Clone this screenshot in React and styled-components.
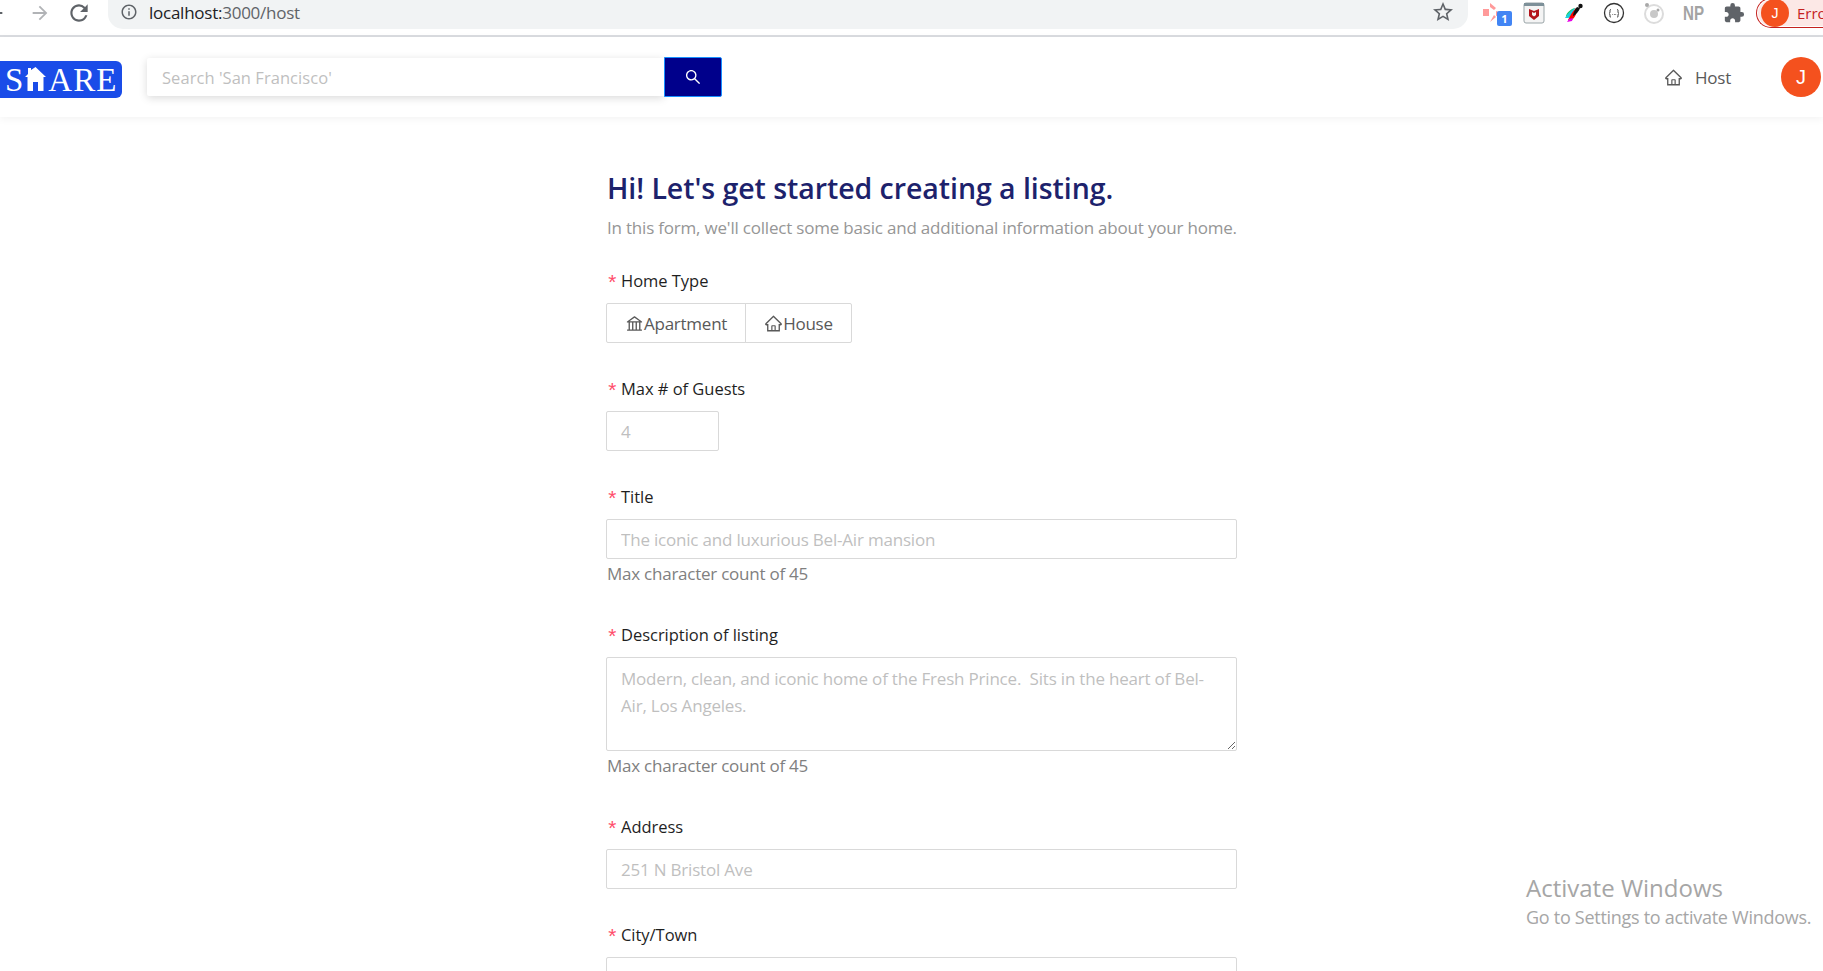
import React from "react";
import styled, { createGlobalStyle } from "styled-components";
import { AiOutlineBank, AiOutlineHome, AiOutlineSearch } from "react-icons/ai";
import { MdArrowForward, MdExtension, MdInfoOutline, MdRefresh, MdStarBorder, MdArrowBack } from "react-icons/md";

const GlobalStyle = createGlobalStyle`
  html, body {
    margin: 0;
    height: 100%;
    overflow: hidden;
    background: #fff;
  }
  body {
    font-family: "Open Sans", "Noto Sans", sans-serif;
  }
  * {
    box-sizing: border-box;
  }
`;

const Page = styled.div`
  width: 1823px;
  height: 971px;
  overflow: hidden;
  position: relative;
`;

const BrowserBar = styled.div`
  display: flex;
  align-items: flex-start;
  height: 37px;
  border-bottom: 2px solid #dadce0;
  background: #fff;
  overflow: hidden;
`;
const NavIcons = styled.div`
  display: flex;
  align-items: center;
  gap: 15px;
  height: 26px;
  margin-left: -16px;
  width: 124px;
  flex-shrink: 0;
  svg {
    display: block;
  }
`;
const NavIcon = styled.span`
  display: flex;
  margin-right: ${(p) => p.$after || 0}px;
  color: ${(p) => p.$color};
`;
const Omnibox = styled.div`
  display: flex;
  align-items: center;
  width: 1360px;
  height: 30px;
  margin-top: -1px;
  padding: 0 13px 4px 12px;
  background: #f1f3f4;
  border-radius: 0 0 15px 15px;
  flex-shrink: 0;
`;
const Url = styled.span`
  margin-left: 11px;
  font-size: 17px;
  letter-spacing: -0.25px;
  color: #5f6368;
  b {
    font-weight: 400;
    color: #202124;
  }
`;
const StarWrap = styled.span`
  display: flex;
  margin-left: auto;
  color: #5f6368;
`;
const Extensions = styled.div`
  display: flex;
  align-items: center;
  height: 26px;
  margin-left: 12px;
  gap: 12px;
  flex-shrink: 0;
`;
const ExtSlot = styled.span`
  display: flex;
  justify-content: center;
  width: 28px;
  position: relative;
  color: #5f6368;
`;
const Badge = styled.span`
  position: absolute;
  right: -4px;
  top: 9px;
  width: 15px;
  height: 15px;
  border-radius: 2px;
  background: #4285f4;
  color: #fff;
  font-size: 11px;
  font-weight: 700;
  line-height: 15px;
  text-align: center;
`;
const NpMark = styled.span`
  font-family: "Liberation Sans", sans-serif;
  font-size: 21px;
  line-height: 24px;
  font-weight: 700;
  color: #a3a3a3;
  transform: scaleX(0.72);
`;
const ErrorPill = styled.div`
  display: flex;
  align-items: center;
  height: 30px;
  width: 70px;
  margin-top: -2px;
  margin-left: 8px;
  padding-left: 4px;
  border: 1px solid #c5221f;
  border-right: 0;
  border-radius: 15px 0 0 15px;
  background: #fce8e6;
  box-shadow: inset 0 0 0 1px #fff;
  color: #c5221f;
  font-size: 15px;
  flex-shrink: 0;
`;
const PillAvatar = styled.span`
  display: flex;
  align-items: center;
  justify-content: center;
  width: 28px;
  height: 28px;
  border-radius: 50%;
  background: #f4511e;
  color: #fff;
  font-family: "Liberation Sans", sans-serif;
  font-size: 14px;
  margin-right: 8px;
  flex-shrink: 0;
`;

const Header = styled.header`
  display: flex;
  align-items: center;
  height: 80px;
  background: #fff;
  box-shadow: 0 2px 8px rgba(0, 0, 0, 0.05);
  padding-right: 2px;
`;
const Logo = styled.div`
  display: flex;
  align-items: center;
  width: 122px;
  height: 37px;
  margin-top: 5px;
  padding: 1px 0 0 5px;
  background: #1a4ce8;
  border-radius: 0 6px 6px 0;
  color: #fff;
  font-family: "Liberation Serif", serif;
  font-size: 33px;
  line-height: 37px;
  letter-spacing: 1px;
  svg {
    margin: 0 2px 3px 1px;
  }
`;
const SearchForm = styled.div`
  display: flex;
  margin-left: 25px;
`;
const SearchInput = styled.input`
  width: 517px;
  height: 38px;
  padding: 2px 15px 0;
  border: 0;
  outline: 0;
  border-radius: 2px 0 0 2px;
  box-shadow: 0 2px 8px rgba(0, 0, 0, 0.15);
  font-family: inherit;
  font-size: 16.5px;
  letter-spacing: 0.05px;
  &::placeholder {
    color: #bfbfbf;
  }
`;
const SearchButton = styled.button`
  display: flex;
  align-items: center;
  justify-content: center;
  width: 58px;
  height: 40px;
  margin-top: -1px;
  padding: 0;
  border: 1px solid #1890ff;
  border-radius: 0 2px 2px 0;
  background: #00008b;
  color: #fff;
`;
const HostLink = styled.a`
  display: flex;
  align-items: center;
  gap: 12px;
  margin-left: auto;
  margin-right: 50px;
  font-size: 17px;
  color: #595959;
  letter-spacing: -0.2px;
`;
const Avatar = styled.span`
  display: flex;
  align-items: center;
  justify-content: center;
  width: 40px;
  height: 40px;
  border-radius: 50%;
  background: #f4511e;
  color: #fff;
  font-family: "Liberation Sans", sans-serif;
  font-size: 20px;
`;

const Main = styled.main`
  display: flex;
  flex-direction: column;
  width: 631px;
  margin-left: 606px;
  padding-top: 50px;
`;
const Heading = styled.h1`
  margin: 0 0 0 1px;
  font-size: 28.5px;
  line-height: 42px;
  font-weight: 600;
  color: #1d226c;
  letter-spacing: -0.05px;
  white-space: nowrap;
`;
const Intro = styled.p`
  margin: 7px 0 29px 1px;
  font-size: 17px;
  line-height: 24px;
  color: #969696;
  letter-spacing: -0.2px;
  white-space: nowrap;
`;
const Field = styled.div`
  margin-bottom: ${(p) => p.$gap}px;
`;
const Label = styled.label`
  display: flex;
  align-items: center;
  height: 24px;
  margin-bottom: 10px;
  font-size: 16.5px;
  line-height: 24px;
  color: #1f1f1f;
  letter-spacing: -0.03px;
  &::before {
    content: "*";
    width: 15px;
    padding-top: 7px;
    color: #ff4d6a;
    font-family: "Liberation Mono", monospace;
    font-size: 21px;
  }
`;
const RadioGroup = styled.div`
  display: inline-flex;
  height: 40px;
`;
const RadioButton = styled.span`
  display: inline-flex;
  align-items: center;
  height: 40px;
  padding: 0 18px 0 19px;
  border: 1px solid #d9d9d9;
  margin-left: -1px;
  font-size: 17px;
  letter-spacing: -0.25px;
  color: #595959;
  &:first-child {
    margin-left: 0;
    border-radius: 2px 0 0 2px;
  }
  &:last-child {
    border-radius: 0 2px 2px 0;
  }
  svg {
    margin-left: -1px;
  }
`;
const TextInput = styled.input`
  display: block;
  width: ${(p) => p.$width || "100%"};
  height: 40px;
  padding: 1px 14px 0;
  border: 1px solid #d9d9d9;
  border-radius: 2px;
  outline: 0;
  font-family: inherit;
  font-size: 17px;
  letter-spacing: -0.2px;
  &::placeholder {
    color: #bfbfbf;
  }
`;
const TextArea = styled.textarea`
  display: block;
  width: 100%;
  height: 94px;
  padding: 7px 14px;
  border: 1px solid #d9d9d9;
  border-radius: 2px;
  outline: 0;
  font-family: inherit;
  font-size: 17px;
  line-height: 27px;
  letter-spacing: -0.2px;
  &::placeholder {
    color: #bfbfbf;
  }
`;
const Help = styled.div`
  height: 30px;
  padding-left: 1px;
  font-size: 17px;
  line-height: 30px;
  letter-spacing: -0.24px;
  color: #808080;
`;

const Watermark = styled.div`
  position: absolute;
  left: 1526px;
  top: 872px;
  color: #a6a6a6;
  font-size: 18px;
  line-height: 26px;
  letter-spacing: -0.28px;
  white-space: nowrap;
  strong {
    display: block;
    font-weight: 400;
    font-size: 24px;
    line-height: 32px;
    letter-spacing: 0;
  }
`;

function McafeeIcon() {
  return (
    <svg width="22" height="22" viewBox="0 0 22 22">
      <rect x="1" y="1" width="20" height="20" rx="2" fill="#f4f4f4" stroke="#9aa5a8" />
      <rect x="1" y="1" width="20" height="3" fill="#7d9099" />
      <path d="M6 7l5 2 5-2v7l-5 4-5-4z" fill="#b3141b" />
      <path d="M9 10l2 1 2-1v3l-2 1.500-2-1.500z" fill="#f4f4f4" />
    </svg>
  );
}

function FeatherIcon() {
  return (
    <svg width="24" height="24" viewBox="0 0 24 24">
      <path d="M4 15c1-4 5-7 9-8l-5 9z" fill="#19c65a" />
      <path d="M3 17c3-5 6-8 10-10l-3 9-4 1z" fill="#19d0e0" />
      <path d="M6 19c2-4 4-8 8-12 2 4-1 9-4 12z" fill="#f00" />
      <path d="M5 21l2-3 4-1-1 3z" fill="#e600e6" />
      <path d="M11 15c0-3 2-7 4-9l3 1c-1 3-4 7-7 8z" fill="#111" />
      <circle cx="18.500" cy="5" r="2.200" fill="#111" />
    </svg>
  );
}

function BracesIcon() {
  return (
    <svg width="22" height="22" viewBox="0 0 22 22" fill="none" stroke="#333">
      <circle cx="11" cy="11" r="9.500" strokeWidth="1.300" />
      <path d="M8 7.500c-1 0-1 .5-1 1.500s0 2-1 2.500c1 .5 1 1.500 1 2.500s0 1 1 1M14 7.500c1 0 1 .5 1 1.500s0 2 1 2.500c-1 .5-1 1.500-1 2.500s0 1-1 1" strokeWidth="1" />
      <path d="M9.500 12.500h.6M11 12.500h.6M12.500 12.500h.6" strokeWidth="1" />
    </svg>
  );
}

function IonIcon() {
  return (
    <svg width="24" height="24" viewBox="0 0 24 24" fill="none" stroke="#dcdcdc">
      <circle cx="12" cy="13" r="9" strokeWidth="2" />
      <circle cx="12" cy="13" r="4" fill="#c8c8c8" stroke="none" />
      <circle cx="5" cy="4" r="2" fill="#a8a8a8" stroke="none" />
      <circle cx="16" cy="9" r="1.500" fill="#a8a8a8" stroke="none" />
    </svg>
  );
}

function ArrowsIcon() {
  return (
    <svg width="24" height="22" viewBox="0 0 24 22" fill="#ff9a9a">
      <path d="M1 7h6v7H1zM8 1l6 5-2 2-4-3zM8 20l4-7 2 2zM14 9l8 3-8 2z" />
    </svg>
  );
}

function HouseMark() {
  return (
    <svg width="21" height="25" viewBox="0 0 21 25" fill="#fff">
      <path d="M10.500 1L21 11h-2.500v14H13v-9H8v9H2.500V11H0l3-3V2h3v2z" />
    </svg>
  );
}

export default function App() {
  return (
    <Page>
      <GlobalStyle />
      <BrowserBar>
        <NavIcons>
          <NavIcon $color="#5f6368" $after={8}><MdArrowBack size={22} /></NavIcon>
          <NavIcon $color="#b1b3b6"><MdArrowForward size={22} /></NavIcon>
          <NavIcon $color="#5f6368"><MdRefresh size={26} /></NavIcon>
        </NavIcons>
        <Omnibox>
          <MdInfoOutline size={18} color="#5f6368" />
          <Url><b>localhost:</b>3000/host</Url>
          <StarWrap><MdStarBorder size={24} /></StarWrap>
        </Omnibox>
        <Extensions>
          <ExtSlot><ArrowsIcon /><Badge>1</Badge></ExtSlot>
          <ExtSlot><McafeeIcon /></ExtSlot>
          <ExtSlot><FeatherIcon /></ExtSlot>
          <ExtSlot><BracesIcon /></ExtSlot>
          <ExtSlot><IonIcon /></ExtSlot>
          <ExtSlot><NpMark>NP</NpMark></ExtSlot>
          <ExtSlot><MdExtension size={22} /></ExtSlot>
        </Extensions>
        <ErrorPill>
          <PillAvatar>J</PillAvatar>
          Erro
        </ErrorPill>
      </BrowserBar>

      <Header>
        <Logo>S<HouseMark />ARE</Logo>
        <SearchForm>
          <SearchInput placeholder="Search 'San Francisco'" />
          <SearchButton><AiOutlineSearch size={18} /></SearchButton>
        </SearchForm>
        <HostLink><AiOutlineHome size={19} />Host</HostLink>
        <Avatar>J</Avatar>
      </Header>

      <Main>
        <Heading>Hi! Let's get started creating a listing.</Heading>
        <Intro>In this form, we'll collect some basic and additional information about your home.</Intro>

        <Field $gap={34}>
          <Label>Home Type</Label>
          <RadioGroup>
            <RadioButton><AiOutlineBank size={19} />Apartment</RadioButton>
            <RadioButton><AiOutlineHome size={19} />House</RadioButton>
          </RadioGroup>
        </Field>

        <Field $gap={34}>
          <Label>Max # of Guests</Label>
          <TextInput $width="113px" placeholder="4" />
        </Field>

        <Field $gap={34}>
          <Label>Title</Label>
          <TextInput placeholder="The iconic and luxurious Bel-Air mansion" />
          <Help>Max character count of 45</Help>
        </Field>

        <Field $gap={34}>
          <Label>Description of listing</Label>
          <TextArea placeholder="Modern, clean, and iconic home of the Fresh Prince.  Sits in the heart of Bel-Air, Los Angeles." />
          <Help>Max character count of 45</Help>
        </Field>

        <Field $gap={34}>
          <Label>Address</Label>
          <TextInput placeholder="251 N Bristol Ave" />
        </Field>

        <Field $gap={33}>
          <Label>City/Town</Label>
          <TextInput placeholder="Los Angeles" />
        </Field>
      </Main>

      <Watermark>
        <strong>Activate Windows</strong>
        Go to Settings to activate Windows.
      </Watermark>
    </Page>
  );
}
